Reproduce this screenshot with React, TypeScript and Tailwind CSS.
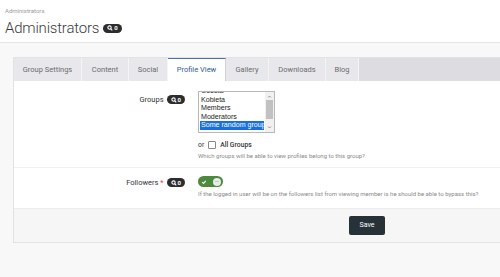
import React from "react";

const Badge = () => (
  <span className="flex items-center gap-[1px] rounded-full bg-[#2d2d2d] px-[4px] h-[9px] text-white text-[6px] font-bold leading-none">
    <svg width="6" height="6" viewBox="0 0 10 10" fill="none" stroke="white" strokeWidth="1.8">
      <circle cx="4.2" cy="4.2" r="2.8" />
      <path d="M6.3 6.3 L8.8 8.8" />
    </svg>
    <span>0</span>
  </span>
);

const tabs = [
  { label: "Group Settings", w: "w-[68px]" },
  { label: "Content", w: "w-[47px]" },
  { label: "Social", w: "w-[39px]" },
  { label: "Profile View", w: "w-[58px]", active: true },
  { label: "Gallery", w: "w-[43px]" },
  { label: "Downloads", w: "w-[57px]" },
  { label: "Blog", w: "w-[33px]" },
];

export default function App() {
  return (
    <div className="w-[500px] h-[277px] overflow-hidden bg-[#f8f8f8] font-['Roboto',sans-serif] text-[#333]">
      <div className="bg-white h-[43px] border-b border-[#e4e4e4] px-[5px] pt-[7px]">
        <div className="text-[6px] leading-[8px] text-[#9a9a9a]">Administrators</div>
        <div className="flex items-center gap-[4px] mt-[3px]">
          <span className="text-[15px] leading-[20px] font-light tracking-[-0.2px] text-[#3a3a3a]">Administrators</span>
          <Badge />
        </div>
      </div>

      <div className="ml-[13px] mt-[14px] w-[489px] border border-[#e2e2e2] bg-white">
        <div className="flex h-[23px] bg-[#dcdce1]">
          {tabs.map((t) => (
            <div
              key={t.label}
              className={
                t.active
                  ? `${t.w} flex items-center justify-center bg-white border-t-[1.5px] border-[#4a6fb0] text-[#2f5aa0] text-[7.5px] border-r border-r-[#d0d0d6]`
                  : `${t.w} flex items-center justify-center bg-[#e8e8ec] text-[#6b6b6b] text-[7.5px] border-r border-r-[#f4f4f6]`
              }
            >
              {t.label}
            </div>
          ))}
        </div>

        <div className="pt-[10px]">
          <div className="flex">
            <div className="w-[171px] flex justify-end items-start pt-[4px] gap-[3px]">
              <span className="text-[7.5px] leading-[9px] text-[#333]">Groups</span>
              <Badge />
            </div>
            <div className="ml-[13px]">
              <div className="flex w-[77px] h-[42px] border border-[#b8b8b8] bg-white overflow-hidden">
                <div className="flex-1 pl-[1px] pr-[1px] overflow-hidden">
                  <div className="-mt-[5px] font-['Liberation_Sans',Arial,sans-serif] text-[7.1px] leading-[8.6px] text-[#222] whitespace-nowrap">
                    <div className="px-[1px]">Osesta</div>
                    <div className="px-[1px]">Kobieta</div>
                    <div className="px-[1px]">Members</div>
                    <div className="px-[1px]">Moderators</div>
                    <div className="px-[1px] bg-[#1a6fe0] text-white">Some random group</div>
                  </div>
                </div>
                <div className="w-[9px] bg-[#f1f1f1] flex flex-col items-center">
                  <svg width="5" height="5" viewBox="0 0 10 10" className="mt-[2px]"><path d="M2 7 L5 4 L8 7" fill="none" stroke="#777" strokeWidth="1.5" /></svg>
                  <div className="w-[7px] h-[19px] bg-[#c1c1c1] mt-[1px]" />
                  <div className="flex-1" />
                  <svg width="5" height="5" viewBox="0 0 10 10" className="mb-[2px]"><path d="M2 3 L5 6 L8 3" fill="none" stroke="#777" strokeWidth="1.5" /></svg>
                </div>
              </div>
              <div className="flex items-center mt-[7px] h-[10px] text-[6.8px] text-[#333]">
                <span>or</span>
                <span className="ml-[4px] w-[8px] h-[8px] border border-[#888] rounded-[1px] bg-white" />
                <span className="ml-[4px] font-medium">All Groups</span>
              </div>
              <div className="mt-[1px] text-[6px] leading-[9px] text-[#8a8a8a] whitespace-nowrap">
                Which groups will be able to view profiles belong to this group?
              </div>
            </div>
          </div>

          <div className="mt-[7px] border-t border-[#f0f0f0]" />

          <div className="flex pt-[8px] pb-[10px]">
            <div className="w-[171px] flex justify-end items-start pt-[2px] gap-[3px]">
              <span className="text-[7.5px] leading-[9px] text-[#333]">
                Followers <span className="text-[#e53935]">*</span>
              </span>
              <Badge />
            </div>
            <div className="ml-[13px]">
              <div className="w-[25px] h-[11px] rounded-full bg-[#4e8a3c] flex items-center justify-between px-[2px]">
                <svg width="6" height="6" viewBox="0 0 10 10" className="ml-[1px]"><path d="M2 5.2 L4.2 7.3 L8 3" fill="none" stroke="white" strokeWidth="1.8" /></svg>
                <span className="w-[8px] h-[8px] rounded-full bg-[#e9ece8] flex items-center justify-center">
                  <span className="w-[4px] h-[1px] bg-[#c5c9c4]" />
                </span>
              </div>
              <div className="mt-[2px] text-[6px] leading-[9px] text-[#8a8a8a] whitespace-nowrap">
                If the logged in user will be on the followers list from viewing member is he should be able to bypass this?
              </div>
            </div>
          </div>

          <div className="border-t border-[#ececec] bg-[#f6f6f6] h-[34px] flex items-center">
            <div className="ml-[335px] w-[36px] h-[19px] rounded-[2px] bg-[#263238] text-white text-[7px] flex items-center justify-center">
              Save
            </div>
          </div>
        </div>
      </div>
    </div>
  );
}
